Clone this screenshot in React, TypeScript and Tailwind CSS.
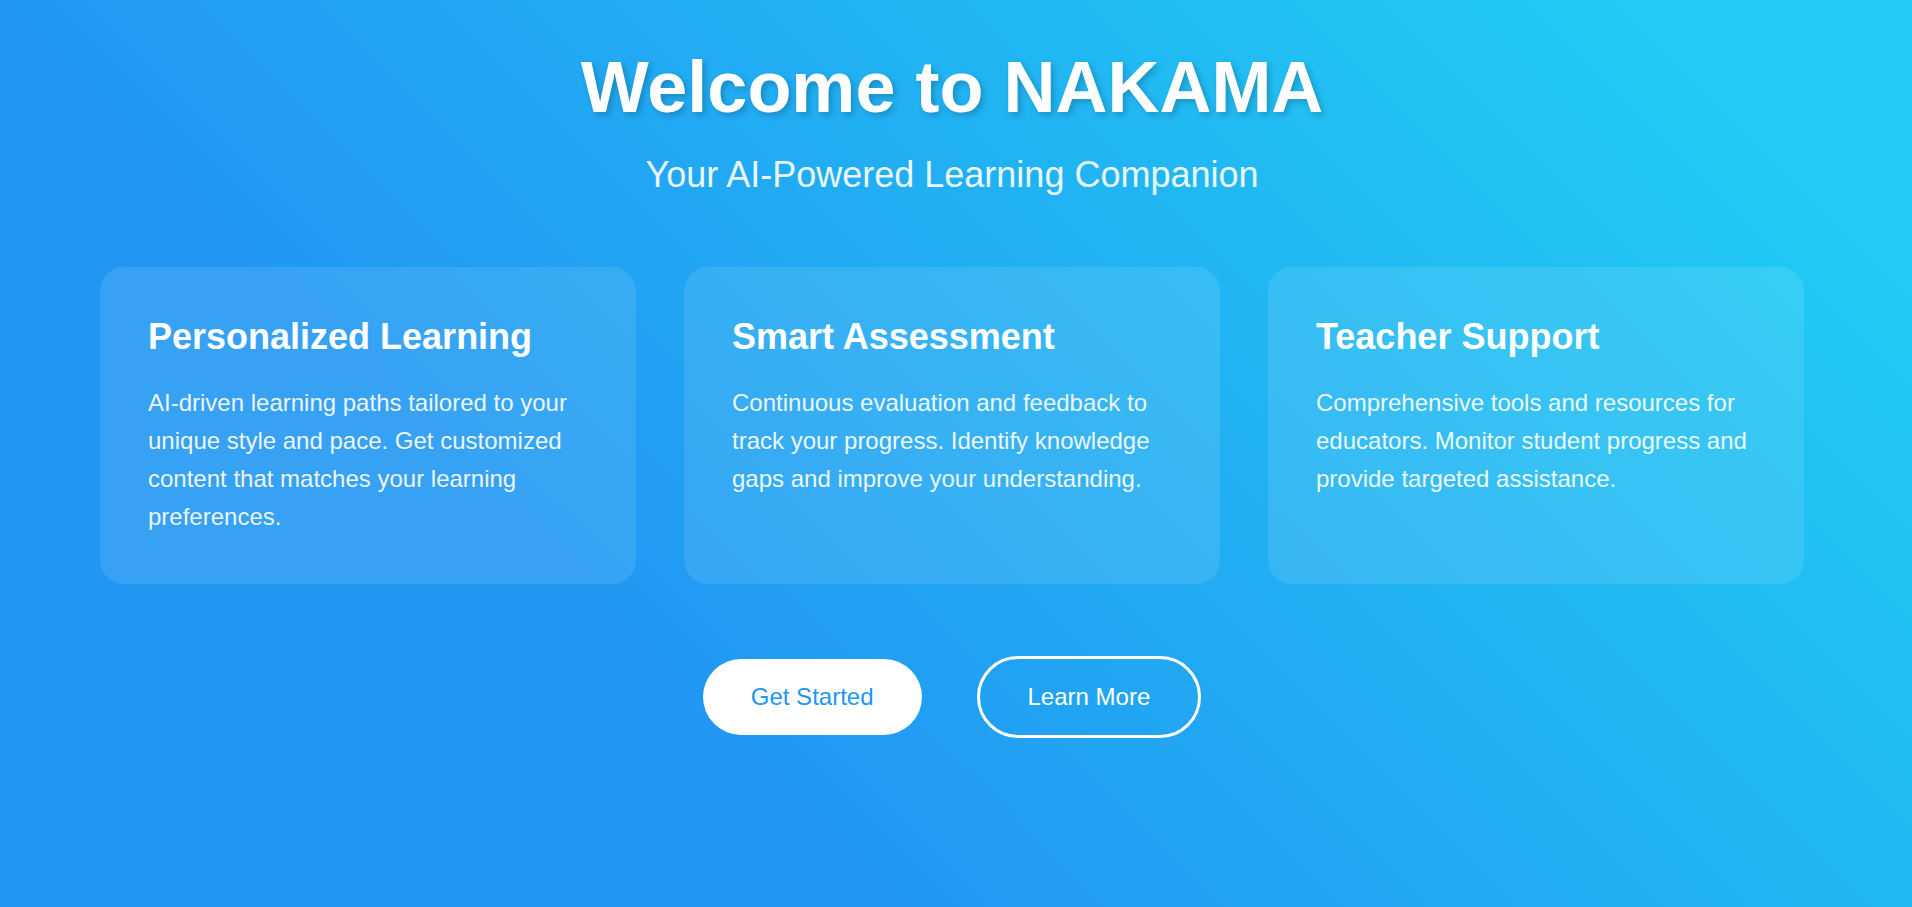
const features = [
  {
    title: 'Personalized Learning',
    text: 'AI-driven learning paths tailored to your unique style and pace. Get customized content that matches your learning preferences.',
  },
  {
    title: 'Smart Assessment',
    text: 'Continuous evaluation and feedback to track your progress. Identify knowledge gaps and improve your understanding.',
  },
  {
    title: 'Teacher Support',
    text: 'Comprehensive tools and resources for educators. Monitor student progress and provide targeted assistance.',
  },
];

function FeatureCard({ title, text }: { title: string; text: string }) {
  return (
    <article className="rounded-3xl bg-white/10 p-12">
      <h2 className="mb-[25px] text-4xl leading-11 font-bold">{title}</h2>
      <p className="text-2xl leading-[38px] opacity-90">{text}</p>
    </article>
  );
}

export default function App() {
  return (
    <main className="min-h-screen bg-[linear-gradient(45deg,#2196F3_30%,#21CBF3_90%)] pt-11 pr-[108px] pb-12 pl-[100px] font-['Liberation_Sans',Arial,sans-serif] text-white">
      <header className="text-center">
        <h1 className="mb-6 text-7xl leading-[86px] font-bold [text-shadow:3px_3px_6px_rgba(0,0,0,0.2)]">
          Welcome to NAKAMA
        </h1>
        <p className="text-4xl leading-[41px] opacity-90">Your AI-Powered Learning Companion</p>
      </header>

      <section className="mt-18 grid gap-12 lg:grid-cols-3">
        {features.map((feature) => (
          <FeatureCard key={feature.title} title={feature.title} text={feature.text} />
        ))}
      </section>

      <div className="mt-18 flex flex-wrap items-center justify-center gap-[55px]">
        <button type="button" className="rounded-[38px] bg-white px-12 py-6 text-2xl leading-7 text-[#2196F3]">
          Get Started
        </button>
        <button type="button" className="rounded-[41px] border-3 border-white px-12 py-6 text-2xl leading-7">
          Learn More
        </button>
      </div>
    </main>
  );
}
